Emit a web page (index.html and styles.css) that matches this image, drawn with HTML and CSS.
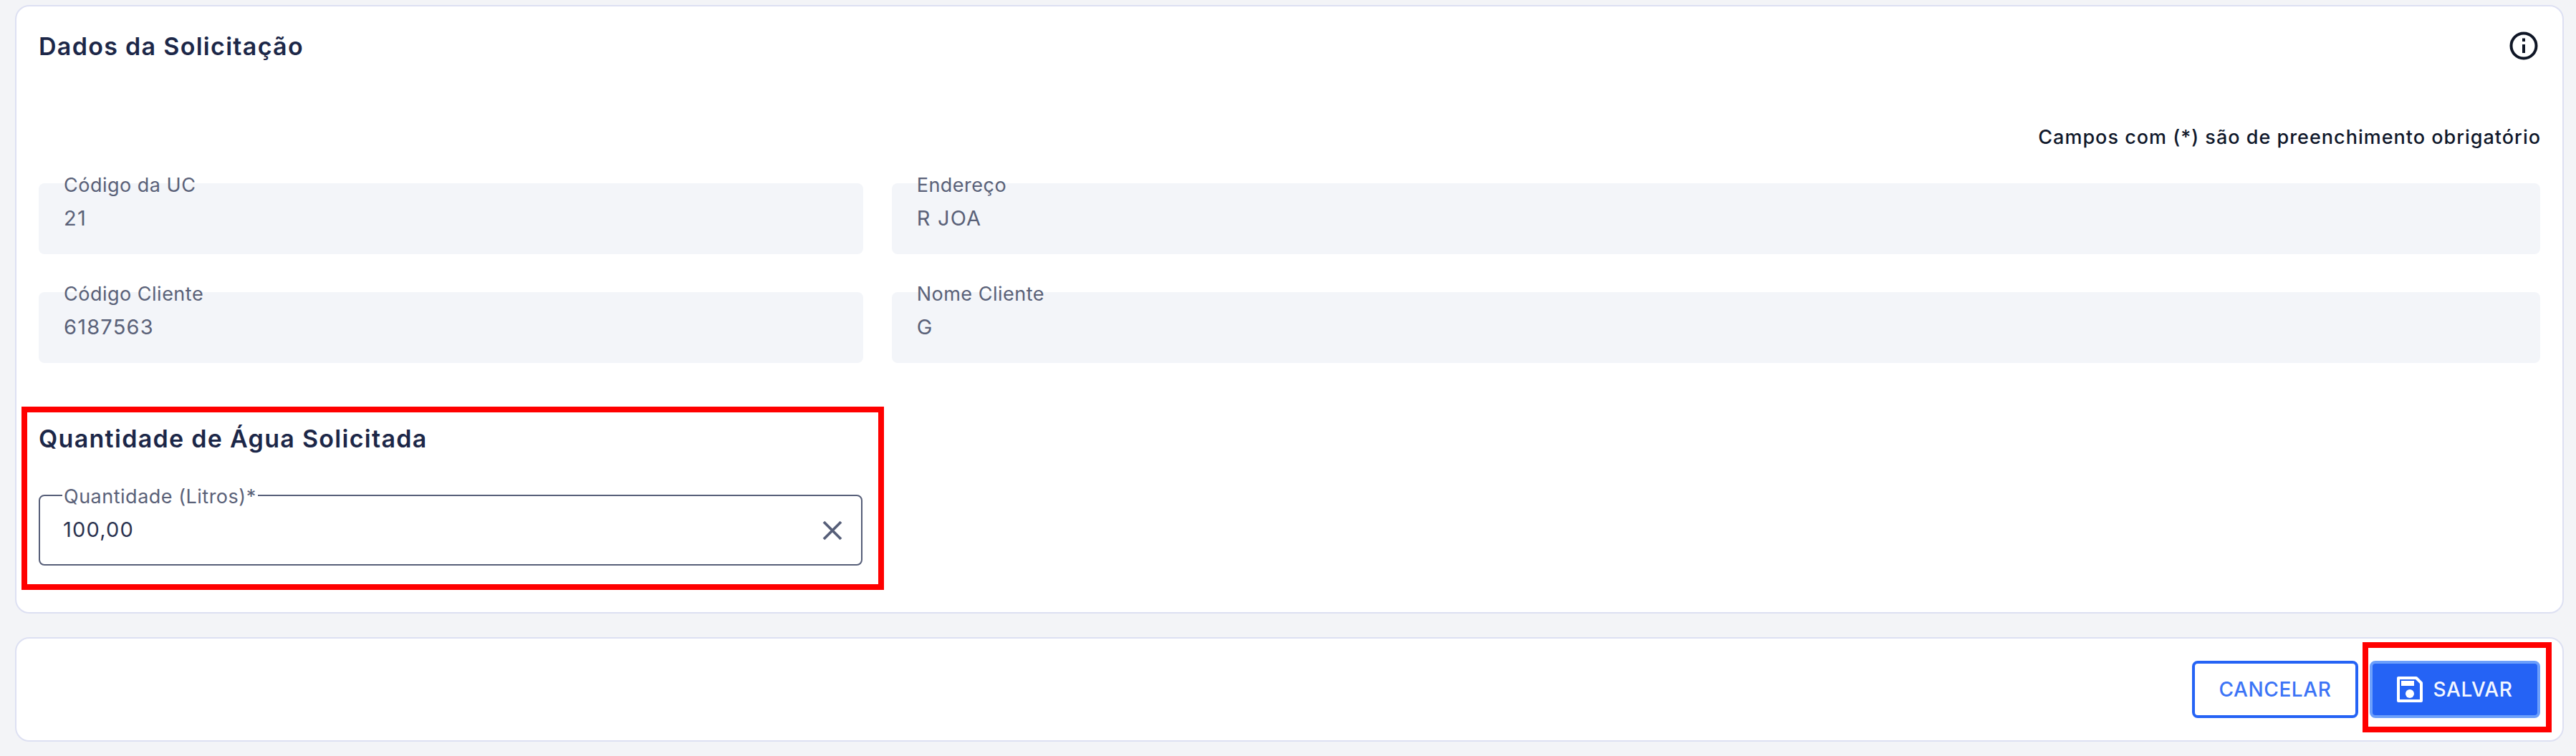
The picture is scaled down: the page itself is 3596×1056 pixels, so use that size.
FILE: index.html
```html
<!DOCTYPE html>
<html lang="pt-BR">
<head>
<meta charset="utf-8">
<title>Dados da Solicitação</title>
<link rel="stylesheet" href="styles.css">
</head>
<body>
<main class="page">
  <section class="card form-card">
    <header class="card-head">
      <h2 class="title">Dados da Solicitação</h2>
      <svg class="info" viewBox="0 0 40 40" aria-hidden="true"><circle cx="20" cy="20" r="17.5" fill="none" stroke="#0f1626" stroke-width="4"/><rect x="18" y="18" width="4" height="12" fill="#0f1626"/><rect x="18" y="9.500" width="4" height="4.500" fill="#0f1626"/></svg>
    </header>
    <p class="note">Campos com (*) são de preenchimento obrigatório</p>
    <div class="grid">
      <div class="field"><span class="label">Código da UC</span><span class="value">21</span></div>
      <div class="field"><span class="label">Endereço</span><span class="value">R JOA</span></div>
      <div class="field"><span class="label">Código Cliente</span><span class="value">6187563</span></div>
      <div class="field"><span class="label">Nome Cliente</span><span class="value">G</span></div>
    </div>
    <h2 class="title section-title">Quantidade de Água Solicitada</h2>
    <div class="field outlined">
      <span class="label">Quantidade (Litros)*</span>
      <span class="value">100,00</span>
      <svg class="clear" viewBox="0 0 28 28" aria-hidden="true"><path d="M2 2 26 26M26 2 2 26" fill="none" stroke="#565e78" stroke-width="3.800"/></svg>
    </div>
    <div class="mark mark-qty"></div>
  </section>
  <footer class="card actions">
    <button class="btn btn-outline" type="button">CANCELAR</button>
    <button class="btn btn-solid" type="button">
      <svg class="save" viewBox="0 0 36 36" aria-hidden="true"><path fill="none" stroke="#fff" stroke-width="4" stroke-linejoin="round" d="M2 2H27L34 9V34H2Z"/><rect x="6" y="6" width="18" height="7" fill="#fff"/><circle cx="18" cy="24" r="6" fill="#fff"/></svg>
      SALVAR
    </button>
    <div class="mark mark-save"></div>
  </footer>
</main>
</body>
</html>
```
FILE: styles.css
```css
* { box-sizing: border-box; }
html, body { margin: 0; height: 100%; }
body {
  background: #f3f4f7;
  font-family: Inter, "Noto Sans", "Liberation Sans", sans-serif;
  color: #1b2540;
}
.page {
  display: flex;
  flex-direction: column;
  gap: 33px;
  padding: 7px 17px 0 21px;
}
.card {
  position: relative;
  background: #fff;
  border: 2px solid #dde0f2;
  border-radius: 20px;
}
.form-card {
  height: 850px;
  padding: 0 31px;
}
.card-head {
  display: flex;
  justify-content: space-between;
  align-items: center;
  height: 112px;
}
.title {
  margin: 0;
  font-size: 34px;
  font-weight: 600;
  letter-spacing: 1.3px;
  line-height: 44px;
  color: #1c2748;
}
.info { width: 40px; height: 40px; margin-right: 3px; margin-top: -3px; }
.note {
  margin: 0 -1px 0 0;
  padding-top: 53px;
  height: 135px;
  text-align: right;
  font-size: 27px;
  font-weight: 500;
  letter-spacing: 1px;
  line-height: 36px;
  color: #10182b;
}
.grid {
  display: grid;
  grid-template-columns: 1fr 2fr;
  column-gap: 40px;
  row-gap: 53px;
}
.field {
  position: relative;
  height: 99px;
  padding: 29px 35px 0;
  background: #f3f5f9;
  border-radius: 8px;
}
.label {
  position: absolute;
  left: 35px;
  top: -14px;
  font-size: 27px;
  letter-spacing: 0.5px;
  line-height: 34px;
  color: #5a6178;
}
.value {
  display: block;
  font-size: 29px;
  letter-spacing: 1.2px;
  line-height: 40px;
  color: #5a6178;
}
.section-title { margin-top: 84px; }
.outlined {
  margin-top: 56px;
  width: 1150px;
  background: #fff;
  border: 2px solid #565e78;
  padding: 27px 32px 0;
}
.outlined .label {
  left: 31px;
  top: -16px;
  padding: 0 2px;
  background: #fff;
}
.outlined .value { color: #2b3350; }
.clear {
  position: absolute;
  right: 26px;
  top: 34px;
  width: 28px;
  height: 28px;
}
.actions {
  display: flex;
  justify-content: flex-end;
  align-items: center;
  gap: 16px;
  height: 146px;
  padding-right: 31px;
}
.btn {
  display: flex;
  align-items: center;
  justify-content: center;
  gap: 14px;
  height: 80px;
  border-radius: 8px;
  font-family: inherit;
  font-size: 28px;
  font-weight: 500;
  letter-spacing: 0.6px;
}
.btn-outline {
  width: 232px;
  background: #fff;
  border: 4px solid #2563f5;
  color: #3c74f6;
}
.btn-solid {
  width: 238px;
  padding-left: 6px;
  background: #2563f5;
  border: 4px solid #6c9ffb;
  color: #f4f7ff;
}
.save { width: 36px; height: 36px; }
.mark {
  position: absolute;
  border: 8px solid #ff0000;
  pointer-events: none;
}
.mark-qty {
  left: 7px;
  top: 559px;
  width: 1204px;
  height: 256px;
}
.mark-save {
  right: 15px;
  top: 5px;
  width: 264px;
  height: 126px;
}
```
